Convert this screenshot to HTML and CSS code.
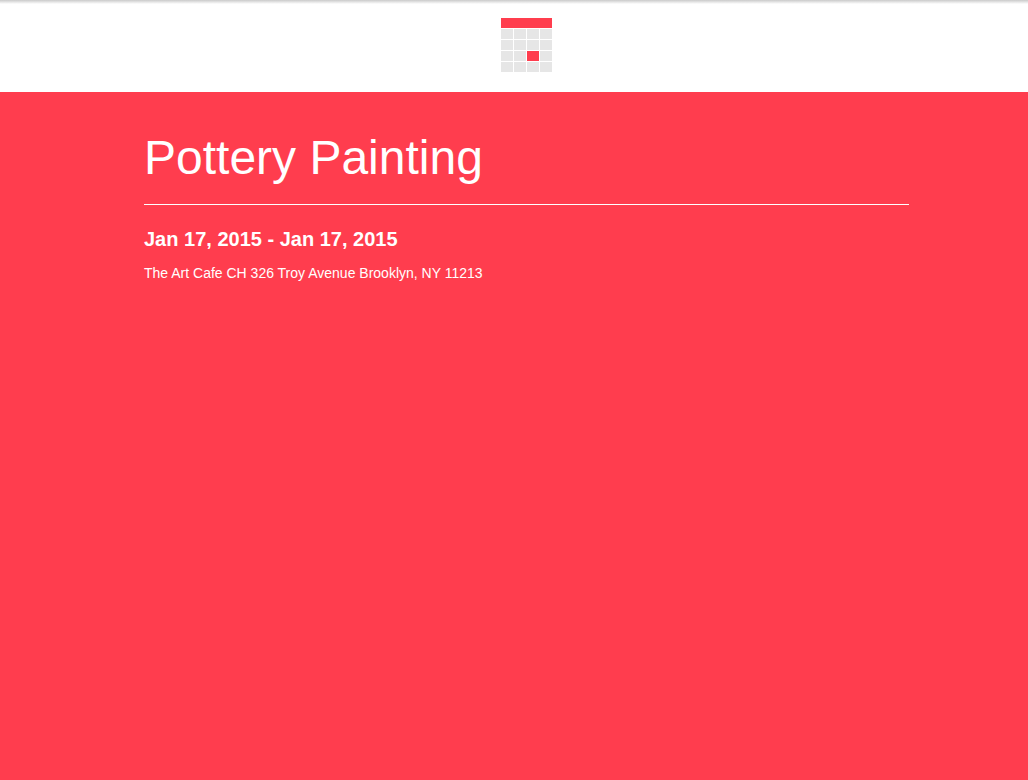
FILE: index.html
```html
<!DOCTYPE html>
<html lang="en">
<head>
<meta charset="utf-8">
<meta name="viewport" content="width=device-width, initial-scale=1">
<title>Pottery Painting</title>
<link rel="stylesheet" href="styles.css">
</head>
<body>
<header class="site-header">
  <svg class="logo" viewBox="0 0 51 54" role="img" aria-label="Calendar" shape-rendering="crispEdges">
    <rect class="logo-accent" width="51" height="10"/>
    <g class="logo-cell">
      <path d="M0 11h12v10H0zM13 11h12v10H13zM26 11h12v10H26zM39 11h12v10H39z"/>
      <path d="M0 22h12v10H0zM13 22h12v10H13zM26 22h12v10H26zM39 22h12v10H39z"/>
      <path d="M0 33h12v10H0zM13 33h12v10H13zM39 33h12v10H39z"/>
      <path d="M0 44h12v10H0zM13 44h12v10H13zM26 44h12v10H26zM39 44h12v10H39z"/>
    </g>
    <rect class="logo-accent" x="26" y="33" width="12" height="10"/>
  </svg>
</header>
<main class="event">
  <div class="event-content">
    <h1 class="event-title">Pottery Painting</h1>
    <h2 class="event-dates">Jan 17, 2015 - Jan 17, 2015</h2>
    <p class="event-place">The Art Cafe CH 326 Troy Avenue Brooklyn, NY 11213</p>
  </div>
</main>
</body>
</html>
```
FILE: styles.css
```css
* {
  box-sizing: border-box;
}

body {
  display: flex;
  flex-direction: column;
  min-height: 100vh;
  margin: 0;
  color: #fff;
  background: #ff3d4e;
  font-family: "Liberation Sans", Arial, sans-serif;
  font-size: 14px;
  line-height: 20px;
}

.site-header {
  display: flex;
  justify-content: center;
  padding: 18px 0 20px 25px;
  background: linear-gradient(#cacaca, #fff 4px);
}

.logo {
  display: block;
  width: 51px;
  height: 54px;
}

.logo-accent {
  fill: #ff3d4e;
}

.logo-cell {
  fill: #e6e6e6;
}

.event {
  flex: 1;
  padding: 39px 0 39px 25px;
}

.event-content {
  max-width: 765px;
  margin: 0 auto;
}

.event-title {
  margin: 0 0 23px;
  padding-bottom: 20px;
  border-bottom: 1px solid #fff;
  font-size: 48px;
  font-weight: 400;
  line-height: 53px;
}

.event-dates {
  margin: 0 0 13px;
  font-size: 20px;
  line-height: 22px;
}

.event-place {
  margin: 0;
}
```
